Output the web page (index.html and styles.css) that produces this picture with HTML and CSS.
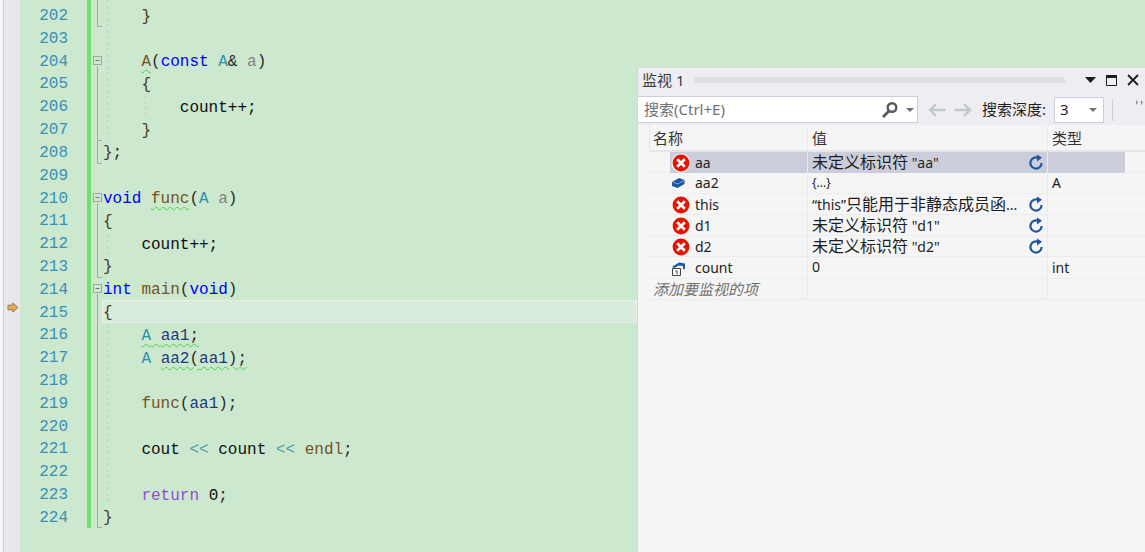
FILE: index.html
```html
<!DOCTYPE html>
<html lang="zh">
<head>
<meta charset="utf-8">
<title>监视 1</title>
<link rel="stylesheet" href="styles.css">
</head>
<body>
<svg class="defs" width="0" height="0" aria-hidden="true">
  <symbol id="err" viewBox="0 0 20 20">
    <circle cx="10" cy="10" r="9.6" fill="#f6f6f6"/>
    <circle cx="10" cy="10" r="8.4" fill="#e51400"/>
    <path d="M6.2 6.2l7.6 7.6M13.8 6.2l-7.6 7.6" stroke="#fff" stroke-width="2.7" fill="none"/>
  </symbol>
  <symbol id="refresh" viewBox="0 0 16 16">
    <path d="M10.8 4.1A5.6 5.6 0 1 0 13.6 9" fill="none" stroke="#1c55a0" stroke-width="2.2"/>
    <path d="M9 0.4v7.2l5-3.9z" fill="#1c55a0"/>
  </symbol>
</svg>
<main class="editor">
  <div class="edge"></div>
  <div class="glyphs">
    <svg class="arrow" width="12" height="11" viewBox="0 0 12 11"><path d="M1 3.2h4.8V1L11 5.5 5.8 10V7.8H1z" fill="#f0a848" stroke="#8a7a5a" stroke-width="1"/></svg>
  </div>
  <div class="nums">
    <div>202</div><div>203</div><div>204</div><div>205</div><div>206</div><div>207</div><div>208</div><div>209</div><div>210</div><div>211</div><div>212</div><div>213</div><div>214</div><div>215</div><div>216</div><div>217</div><div>218</div><div>219</div><div>220</div><div>221</div><div>222</div><div>223</div><div>224</div>
  </div>
  <div class="bar"></div>
  <svg class="fold" width="11" height="528" viewBox="92 0 11 528">
    <g class="fold-line">
      <path d="M97.5 0V26.5H102"/>
      <path d="M97.5 66V163.5H102M97.5 140.500H102"/>
      <path d="M97.5 203V277.5H102"/>
      <path d="M97.5 294V527.5H102"/>
    </g>
    <g class="fold-box">
      <rect x="93.5" y="56.5" width="8" height="8"/><path d="M95.5 60.5h4"/>
      <rect x="93.5" y="193.5" width="8" height="8"/><path d="M95.5 197.5h4"/>
      <rect x="93.5" y="284.5" width="8" height="8"/><path d="M95.5 288.5h4"/>
    </g>
    <g class="guide">
      <path d="M107.5 0V140"/>
      <path d="M145.5 95V118"/>
      <path d="M107.5 228V255"/>
      <path d="M107.5 325V505"/>
    </g>
  </svg>
  <div class="code">
<div class="ln">    <b>}</b></div>
<div class="ln"></div>
<div class="ln">    <span class="fn sq">A</span>(<span class="kw">const</span> <span class="ty">A</span>&amp; <span class="pm">a</span>)</div>
<div class="ln">    <b>{</b></div>
<div class="ln">        <span class="gl">count++;</span></div>
<div class="ln">    <b>}</b></div>
<div class="ln"><b>}</b>;</div>
<div class="ln"></div>
<div class="ln"><span class="kw">void</span> <span class="fn sq">func</span>(<span class="ty">A</span> <span class="pm">a</span>)</div>
<div class="ln"><b>{</b></div>
<div class="ln">    <span class="gl">count++;</span></div>
<div class="ln"><b>}</b></div>
<div class="ln"><span class="kw">int</span> <span class="fn">main</span>(<span class="kw">void</span>)</div>
<div class="ln cur"><b>{</b></div>
<div class="ln">    <span class="sq"><span class="ty">A</span> <span class="lc">aa1</span>;</span></div>
<div class="ln">    <span class="ty">A</span> <span class="sq"><span class="lc">aa2</span>(<span class="lc">aa1</span>);</span></div>
<div class="ln"></div>
<div class="ln">    <span class="fn">func</span>(<span class="lc">aa1</span>);</div>
<div class="ln"></div>
<div class="ln">    <span class="gl">cout</span> <span class="op">&lt;&lt;</span> <span class="gl">count</span> <span class="op">&lt;&lt;</span> <span class="fn">endl</span>;</div>
<div class="ln"></div>
<div class="ln">    <span class="rt">return</span> <span class="gl">0</span>;</div>
<div class="ln"><b>}</b></div>
  </div>

  <section class="panel">
    <header class="title">
      <span class="title-text">监视 1</span>
      <span class="grip"></span>
      <svg class="win" width="11" height="6" viewBox="0 0 11 6"><path d="M0 0h11L5.500 6z" fill="#1e1e1e"/></svg>
      <svg class="win" width="11" height="11" viewBox="0 0 11 11"><path d="M.5.500h10v10H.5z" fill="none" stroke="#1e1e1e"/><path d="M0 0h11v3H0z" fill="#1e1e1e"/></svg>
      <svg class="win" width="12" height="12" viewBox="0 0 12 12"><path d="M1 1l10 10M11 1L1 11" stroke="#1e1e1e" stroke-width="1.800" fill="none"/></svg>
    </header>
    <div class="toolbar">
      <div class="search">
        <span class="search-text">搜索(Ctrl+E)</span>
        <svg width="18" height="18" viewBox="0 0 18 18"><circle cx="11" cy="6.500" r="4.300" fill="none" stroke="#595959" stroke-width="2.400"/><path d="M8 10l-6 6" stroke="#595959" stroke-width="2.800"/></svg>
        <span class="caret"></span>
      </div>
      <svg class="nav" width="20" height="16" viewBox="0 0 20 16"><path d="M18.500 8H3M9 2L3 8l6 6" fill="none" stroke="#bfcaca" stroke-width="2.400"/></svg>
      <svg class="nav" width="20" height="16" viewBox="0 0 20 16"><path d="M1.500 8H17M11 2l6 6-6 6" fill="none" stroke="#bfcaca" stroke-width="2.400"/></svg>
      <span class="depth-label">搜索深度:</span>
      <div class="combo"><span>3</span><span class="caret"></span></div>
      <span class="sep"></span>
      <svg class="more" width="8" height="5" viewBox="0 0 8 5"><path d="M0 0l2 2.500L0 5zM5 0l2 2.500L5 5z" fill="#8a8a8a"/></svg>
    </div>
    <div class="table">
      <div class="row head">
        <span class="c-gutter"></span>
        <span class="c-name">名称</span>
        <span class="c-val">值</span>
        <span class="c-type">类型</span>
      </div>
      <div class="row sel">
        <span class="c-gutter"></span>
        <span class="c-name"><svg class="ic"><use href="#err"/></svg>aa</span>
        <span class="c-val"><span class="cj">未定义标识符</span> "aa"<svg class="rf"><use href="#refresh"/></svg></span>
        <span class="c-type"></span>
      </div>
      <div class="row">
        <span class="c-gutter"></span>
        <span class="c-name"><svg class="ic" viewBox="0 0 20 20"><path d="M1 9l7-4 5.500 2v4l-7 4-5.500-2z" fill="#1c55a0"/><path d="M1.500 9l5.500 2 6-3.500" fill="none" stroke="#7fa6d8"/></svg>aa2</span>
        <span class="c-val small">{...}</span>
        <span class="c-type">A</span>
      </div>
      <div class="row">
        <span class="c-gutter"></span>
        <span class="c-name"><svg class="ic"><use href="#err"/></svg>this</span>
        <span class="c-val">“this”<span class="cj">只能用于非静态成员函</span>...<svg class="rf"><use href="#refresh"/></svg></span>
        <span class="c-type"></span>
      </div>
      <div class="row">
        <span class="c-gutter"></span>
        <span class="c-name"><svg class="ic"><use href="#err"/></svg>d1</span>
        <span class="c-val"><span class="cj">未定义标识符</span> "d1"<svg class="rf"><use href="#refresh"/></svg></span>
        <span class="c-type"></span>
      </div>
      <div class="row">
        <span class="c-gutter"></span>
        <span class="c-name"><svg class="ic"><use href="#err"/></svg>d2</span>
        <span class="c-val"><span class="cj">未定义标识符</span> "d2"<svg class="rf"><use href="#refresh"/></svg></span>
        <span class="c-type"></span>
      </div>
      <div class="row">
        <span class="c-gutter"></span>
        <span class="c-name"><svg class="ic" viewBox="0 0 20 20"><path d="M1.500 10.500h8v7h-8z" fill="#f5f5f5" stroke="#444"/><path d="M4.500 13h1.500v3" fill="none" stroke="#444"/><path d="M1 9l7-4.500 6 1v5l-2 1V8l-4-.5L3 10z" fill="#1c55a0"/></svg>count</span>
        <span class="c-val">0</span>
        <span class="c-type">int</span>
      </div>
      <div class="row add">
        <span class="c-name add-text">添加要监视的项</span>
        <span class="c-val"></span>
        <span class="c-type"></span>
      </div>
    </div>
  </section>
</main>
</body>
</html>
```
FILE: styles.css
```css
* { box-sizing: border-box; }
html, body { margin: 0; height: 552px; overflow: hidden; }
.defs { position: absolute; }

.editor {
  position: relative;
  display: flex;
  align-items: flex-start;
  width: 1145px;
  height: 552px;
  background: #cce8cf;
  font-family: "Liberation Mono", monospace;
  font-size: 16px;
  line-height: 22.8px;
  color: #1a1a1a;
}
.edge {
  flex: none;
  width: 4px;
  height: 552px;
  background: #f5f5f7;
  border-right: 1px solid #ccced8;
}
.glyphs {
  flex: none;
  width: 16px;
  height: 552px;
  padding: 302px 0 0 3px;
  background: #e8e8ec;
}
.arrow { display: block; }
.nums {
  flex: none;
  width: 48px;
  margin-right: 19px;
  padding-top: 5px;
  text-align: right;
  color: #3a90b4;
}
.nums div { height: 22.82px; }
.bar { flex: none; width: 4px; height: 528px; background: #6ce26c; }
.fold { flex: none; margin-left: 1px; overflow: visible; position: relative; z-index: 1; }
.fold-line path { fill: none; stroke: #a5a5a5; }
.fold-box rect { fill: #cce8cf; stroke: #a5a5a5; }
.fold-box path { fill: none; stroke: #777; }
.guide path { fill: none; stroke: #c4ccc8; stroke-dasharray: 3 3; }

.code {
  flex: none;
  width: 535px;
  margin-left: -1px;
  padding-top: 3.5px;
  color: #2a2a2a;
}
.ln { height: 22.82px; line-height: 27px; padding-left: 1px; white-space: pre; }
.ln b { font-weight: normal; color: #4a3a20; }
.cur { background: #d9ecdb; box-shadow: inset 0 0 0 1px #e4f0e5; }
.kw { color: #0000ff; }
.ty { color: #2b91af; }
.fn { color: #74531f; }
.pm { color: #808080; }
.lc { color: #1f377f; }
.gl { color: #0f0f0f; }
.op { color: #4f9aa6; }
.rt { color: #8f4fd0; }
.sq { text-decoration: underline wavy #4fcf4f 1px; text-underline-offset: 3px; }

.panel {
  position: absolute;
  left: 637px;
  top: 67px;
  width: 508px;
  height: 485px;
  display: flex;
  flex-direction: column;
  background: #f5f5f5;
  border-left: 1px solid #d6d6dc;
  border-top: 1px solid #d6dcd8;
  font-family: "Noto Sans", "Noto Sans CJK SC", sans-serif;
  font-size: 14px;
  color: #1e1e1e;
}
.title {
  flex: none;
  display: flex;
  align-items: center;
  height: 26px;
  padding: 0 6px 2px 4px;
  background: #eeeef2;
}
.title-text { width: 53px; font-size: 15px; color: #3a3a3a; }
.grip {
  width: 380px;
  height: 6px;
  margin-right: 10px;
  background: conic-gradient(#d2d2d6 25%, transparent 0 50%, #d2d2d6 0 75%, transparent 0) 0 0 / 2px 2px;
}
.win { flex: none; margin-left: 10px; }
.toolbar {
  flex: none;
  display: flex;
  align-items: center;
  height: 31px;
  background: #eeeef2;
}
.search {
  flex: none;
  display: flex;
  align-items: center;
  width: 280px;
  height: 27px;
  padding-left: 6px;
  background: #fff;
  border: 1px solid #cccedb;
  border-left: 0;
  color: #717171;
  font-size: 15px;
}
.search-text { flex: 1; }
.search svg { margin-right: 7px; }
.caret {
  width: 0;
  height: 0;
  margin-right: 3px;
  border: 4px solid transparent;
  border-top-color: #717171;
  border-bottom: 0;
}
.nav { flex: none; margin-left: 9px; }
.nav + .nav { margin-left: 6px; }
.depth-label { flex: none; width: 72px; margin-left: 9px; font-size: 15px; white-space: nowrap; }
.combo {
  flex: none;
  display: flex;
  align-items: center;
  justify-content: space-between;
  width: 50px;
  height: 26px;
  padding: 0 3px 0 5px;
  background: #fff;
  border: 1px solid #cccedb;
  font-size: 15px;
}
.sep { flex: none; width: 1px; height: 22px; margin-left: 8px; background: #ccced8; }
.more { flex: none; margin: -14px 0 0 23px; }

.table { flex: 1; padding-left: 11px; background: #f5f5f5; }
.row {
  display: grid;
  grid-template-columns: 21px 137px 240px 78px;
  height: 21.1px;
  line-height: 20px;
  border-bottom: 1px solid #ececec;
}
.c-gutter { display: block; }
.c-name, .c-type { display: flex; align-items: center; min-width: 0; white-space: nowrap; }
.c-val { display: block; min-width: 0; white-space: nowrap; }
.c-val, .c-type { padding-left: 4px; border-left: 1px solid #eaeaea; }
.c-val { position: relative; }
.head { height: 27px; line-height: 26px; border-bottom: 2px solid #e6e6e6; font-size: 15px; color: #333; }
.head .c-name { padding-left: 3px; grid-column: 1 / 3; border-left: 1px solid #e6e6e6; }
.head .c-gutter { display: none; }
.sel .c-name, .sel .c-val, .sel .c-type { background: #cbcdda; }
.c-name { padding-left: 1px; }
.ic { flex: none; width: 20px; height: 20px; margin-right: 4px; }
.cj { font-size: 16px; }
.small { font-size: 12px; }
.rf { position: absolute; right: 3px; top: 2px; width: 16px; height: 16px; }
.add .c-name { grid-column: 1 / 3; padding-left: 4px; }
.add-text { font-style: italic; color: #717171; font-size: 15px; }
```
